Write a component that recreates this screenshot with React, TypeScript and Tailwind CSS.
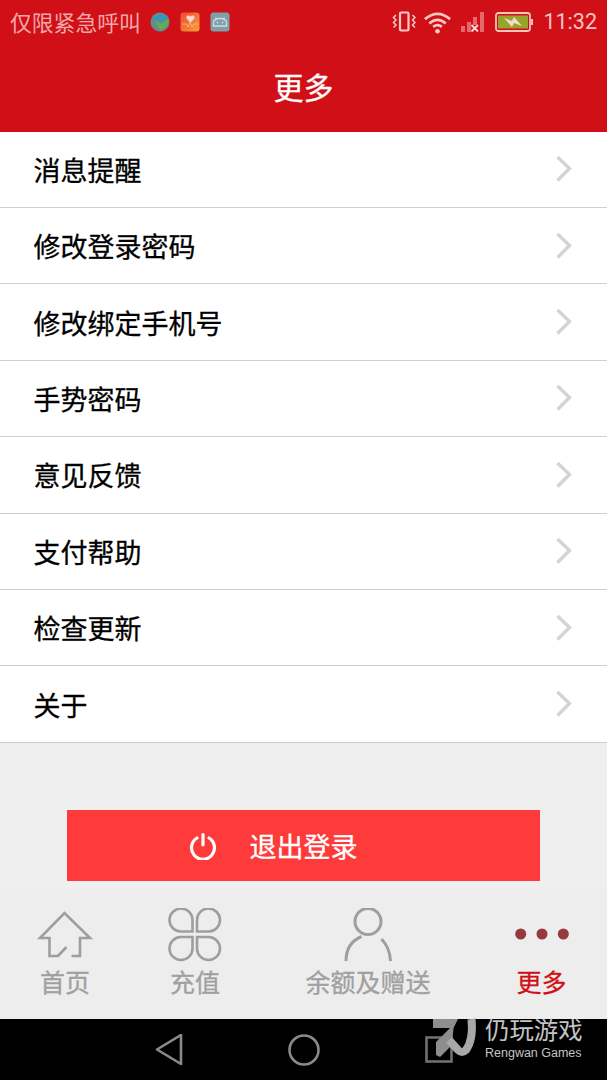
const CJK = "font-['Noto_Sans_CJK_SC','Noto_Sans',sans-serif]";

const rows = ["消息提醒", "修改登录密码", "修改绑定手机号", "手势密码", "意见反馈", "支付帮助", "检查更新", "关于"];

function Chevron() {
  return (
    <svg width="18" height="28" viewBox="0 0 18 28" fill="none" stroke="#d4d4d4" strokeWidth="3.4">
      <path d="M2.5 2 L14.5 13.5 L2.5 25.5" />
    </svg>
  );
}

function StatusLeft() {
  return (
    <div className="flex items-center">
      <span className="ml-[10px] text-[21.8px] leading-none text-[#f0a8aa]">仅限紧急呼叫</span>
      <svg className="ml-[9px]" width="20" height="20" viewBox="0 0 20 20">
        <circle cx="10" cy="10" r="9.5" fill="#5f8f92" />
        <path d="M2 8 Q7 0 16 3 L18 7 L11 11 Z" fill="#3a94b4" />
        <path d="M5 8 L11 12 L19 6 L17 14 L11 18 L8 15 Z" fill="#62b04a" />
      </svg>
      <svg className="ml-[10px]" width="20" height="20" viewBox="0 0 20 20">
        <defs>
          <linearGradient id="hg" x1="0" y1="0" x2="1" y2="1">
            <stop offset="0" stopColor="#ee4a36" />
            <stop offset="1" stopColor="#f6a03a" />
          </linearGradient>
        </defs>
        <rect x="0.5" y="0.5" width="19" height="19" rx="3" fill="url(#hg)" />
        <path d="M10.5 10.5 L6.5 6.5 Q6 3.2 8.7 3.5 Q10 3.7 10.5 4.8 Q11 3.7 12.3 3.5 Q15 3.2 14.5 6.5 Z" fill="#fbd8d4" />
        <path d="M2 12 H6 L8 15 L10 10 L12 15 L14 12 H18" fill="none" stroke="#f8c090" strokeWidth="0.8" />
      </svg>
      <svg className="ml-[10px]" width="20" height="20" viewBox="0 0 20 20">
        <rect x="0.5" y="0.5" width="19" height="19" rx="3" fill="#7ea0a8" />
        <path d="M3.5 14 V11 Q3.5 6.5 10 6.5 Q16.5 6.5 16.5 11 V14 Z" fill="none" stroke="#d0dcde" strokeWidth="1.3" />
        <path d="M6.5 7 L5.5 5 M13.5 7 L14.5 5" stroke="#d0dcde" strokeWidth="1" />
        <circle cx="7.5" cy="10.5" r="0.9" fill="#d0dcde" />
        <circle cx="12.5" cy="10.5" r="0.9" fill="#d0dcde" />
      </svg>
    </div>
  );
}

function StatusRight() {
  return (
    <div className="flex items-center">
      <svg width="24" height="22" viewBox="0 0 24 22" fill="none" stroke="#f8c8c8">
        <rect x="8" y="1.5" width="8.5" height="18" rx="1.2" strokeWidth="2.2" />
        <path d="M4 4 L1.5 6.5 L4 9 L1.5 11.5 L4 14 L1.5 16.5 M20.5 4 L23 6.5 L20.5 9 L23 11.5 L20.5 14 L23 16.5" strokeWidth="1.5" />
      </svg>
      <svg className="ml-[7px]" width="29" height="23" viewBox="0 0 30 23" fill="none" stroke="#f8c8c8" strokeWidth="2.8">
        <path d="M2 8 Q15 -3 28 8" />
        <path d="M6.5 12.5 Q15 5 23.5 12.5" />
        <path d="M10.5 16 Q15 12.5 19.5 16" />
        <circle cx="15" cy="20.5" r="2.4" fill="#f8c8c8" stroke="none" />
      </svg>
      <svg className="ml-[8px]" width="26" height="22" viewBox="0 0 26 22">
        <rect x="1" y="15" width="4" height="6" fill="#e4686c" />
        <rect x="7" y="11" width="4" height="10" fill="#e4686c" />
        <rect x="13" y="6" width="4" height="8" fill="#e4686c" />
        <rect x="20" y="1" width="4" height="20" fill="#e4686c" />
        <path d="M11.5 14 L18 20.5 M18 14 L11.5 20.5" stroke="#f8d8d8" strokeWidth="1.8" />
      </svg>
      <svg className="ml-[9px]" width="39" height="20" viewBox="0 0 39 20">
        <rect x="1" y="1" width="34" height="18" rx="2.5" fill="none" stroke="#f4c4b8" strokeWidth="1.8" />
        <rect x="3" y="3.5" width="30" height="13" fill="#96a42c" />
        <rect x="36" y="7" width="2" height="6" fill="#f4c4b8" />
        <path d="M9 6 L17 9 L19 5 L27 14 L19 11 L17 15 Z" fill="#f6dcc8" />
      </svg>
      <span className="ml-[9px] mr-[10px] text-[21.5px] leading-none text-[#f8c4c4] font-['Roboto',sans-serif]">11:32</span>
    </div>
  );
}

function Tab({ w, label, active, children }: { w: string; label: string; active?: boolean; children: React.ReactNode }) {
  return (
    <div className={`flex flex-col items-center ${w}`}>
      {children}
      <span
        className={`mt-[3px] text-[25px] leading-[30px] ${
          active ? "text-[#d01016] [-webkit-text-stroke:0.3px_#d01016]" : "text-[#a0a0a0] [-webkit-text-stroke:0.3px_#a0a0a0]"
        }`}
      >
        {label}
      </span>
    </div>
  );
}

export default function App() {
  return (
    <div className={`relative flex h-[1080px] w-[607px] flex-col overflow-hidden bg-[#efefef] ${CJK}`}>
      <header className="h-[131.6px] bg-[#d01016]">
        <div className="flex h-[44px] items-center justify-between">
          <StatusLeft />
          <StatusRight />
        </div>
        <h1 className="mt-[2px] text-center text-[30px] leading-[80px] font-normal text-white [-webkit-text-stroke:0.3px_white]">更多</h1>
      </header>

      <ul className="bg-white">
        {rows.map((r) => (
          <li key={r} className="flex h-[76.4px] items-center justify-between border-b border-[#cfcfcf] pr-[34px] pl-[33.5px]">
            <span className="text-[27px] leading-none text-black [-webkit-text-stroke:0.3px_black]">{r}</span>
            <Chevron />
          </li>
        ))}
      </ul>

      <div className="flex-1">
        <button className="mx-auto mt-[67.4px] flex h-[71px] w-[473px] items-center justify-center bg-[#ff3a3a] pr-[61px] text-white">
          <svg width="28" height="28" viewBox="0 0 28 28" fill="none" stroke="white" strokeWidth="3.2" strokeLinecap="round">
            <path d="M14 2.5 V13" />
            <path d="M8 6 A11.5 11.5 0 1 0 20 6" />
          </svg>
          <span className="ml-[33px] text-[27px] leading-none [-webkit-text-stroke:0.3px_white]">退出登录</span>
        </button>
      </div>

      <nav className="flex h-[130px] bg-[#ededed] pt-[19px]">
        <Tab w="w-[130px]" label="首页">
          <svg width="60" height="55" viewBox="35 908 60 55" fill="none" stroke="#9e9e9e" strokeWidth="2.6">
            <path d="M71.5 956 H80 V938 H90 L64.5 913 L40 938 H49.5 V956 H58 L66.5 947" />
          </svg>
        </Tab>
        <Tab w="w-[130px]" label="充值">
          <svg width="60" height="55" viewBox="165 908 60 55" fill="none" stroke="#9e9e9e" strokeWidth="2.6">
            <path d="M192.5 931.5 H180.5 A11.5 11.5 0 1 1 192.5 920 Z" />
            <path d="M197 931.5 H209 A11.5 11.5 0 1 0 197 920 Z" />
            <path d="M192.5 937 H180.5 A11.5 11.5 0 1 0 192.5 949 Z" />
            <path d="M197 937 H209 A11.5 11.5 0 1 1 197 949 Z" />
          </svg>
        </Tab>
        <Tab w="w-[216px]" label="余额及赠送">
          <svg width="60" height="55" viewBox="338 908 60 55" fill="none" stroke="#9e9e9e" strokeWidth="3">
            <circle cx="368" cy="921.5" r="13" />
            <path d="M346 961 Q346 943 361.5 936.5" />
            <path d="M390.5 961 Q390 948 381.5 939" />
          </svg>
        </Tab>
        <Tab w="w-[131px]" label="更多" active>
          <svg width="60" height="55" viewBox="512 908 60 55" fill="#963a3e">
            <circle cx="520.7" cy="934" r="5.5" />
            <circle cx="542" cy="934" r="5.5" />
            <circle cx="563.3" cy="934" r="5.5" />
          </svg>
        </Tab>
      </nav>

      <div className="flex h-[61px] items-center bg-black">
        <svg className="ml-[155px]" width="28" height="32" viewBox="155 1034 28 32" fill="none" stroke="#8a8a8a" strokeWidth="2.6" strokeLinejoin="round">
          <path d="M157 1049.5 L181 1035 V1064 Z" />
        </svg>
        <svg className="ml-[105px]" width="32" height="32" viewBox="0 0 32 32" fill="none" stroke="#8a8a8a" strokeWidth="2.6">
          <circle cx="16" cy="16" r="14.5" />
        </svg>
        <svg className="ml-[105px]" width="28" height="27" viewBox="0 0 28 27" fill="none" stroke="#707070" strokeWidth="2.6">
          <rect x="1.5" y="1.5" width="25" height="24" />
        </svg>
      </div>

      <div className="absolute top-[1014px] left-[432px] flex items-start">
        <svg width="48" height="46" viewBox="432 1014 48 46">
          <path d="M433 1019 H458 L453.5 1028 L452 1045 L440 1057 L436 1055 V1042 L450 1028 H433 Z" fill="#8e8e8e" />
          <path d="M471.5 1019 Q473.5 1040 466 1050 Q462 1054 458 1050 L449 1040" fill="none" stroke="#a8a8a8" strokeWidth="8" />
        </svg>
        <div className="ml-[5px] flex flex-col text-[#c4c4c4]">
          <span className="text-[24.4px] leading-[30px]">仍玩游戏</span>
          <span className="mt-[2px] text-[12.5px] leading-[14px] font-['Liberation_Sans',sans-serif]">Rengwan Games</span>
        </div>
      </div>
    </div>
  );
}
